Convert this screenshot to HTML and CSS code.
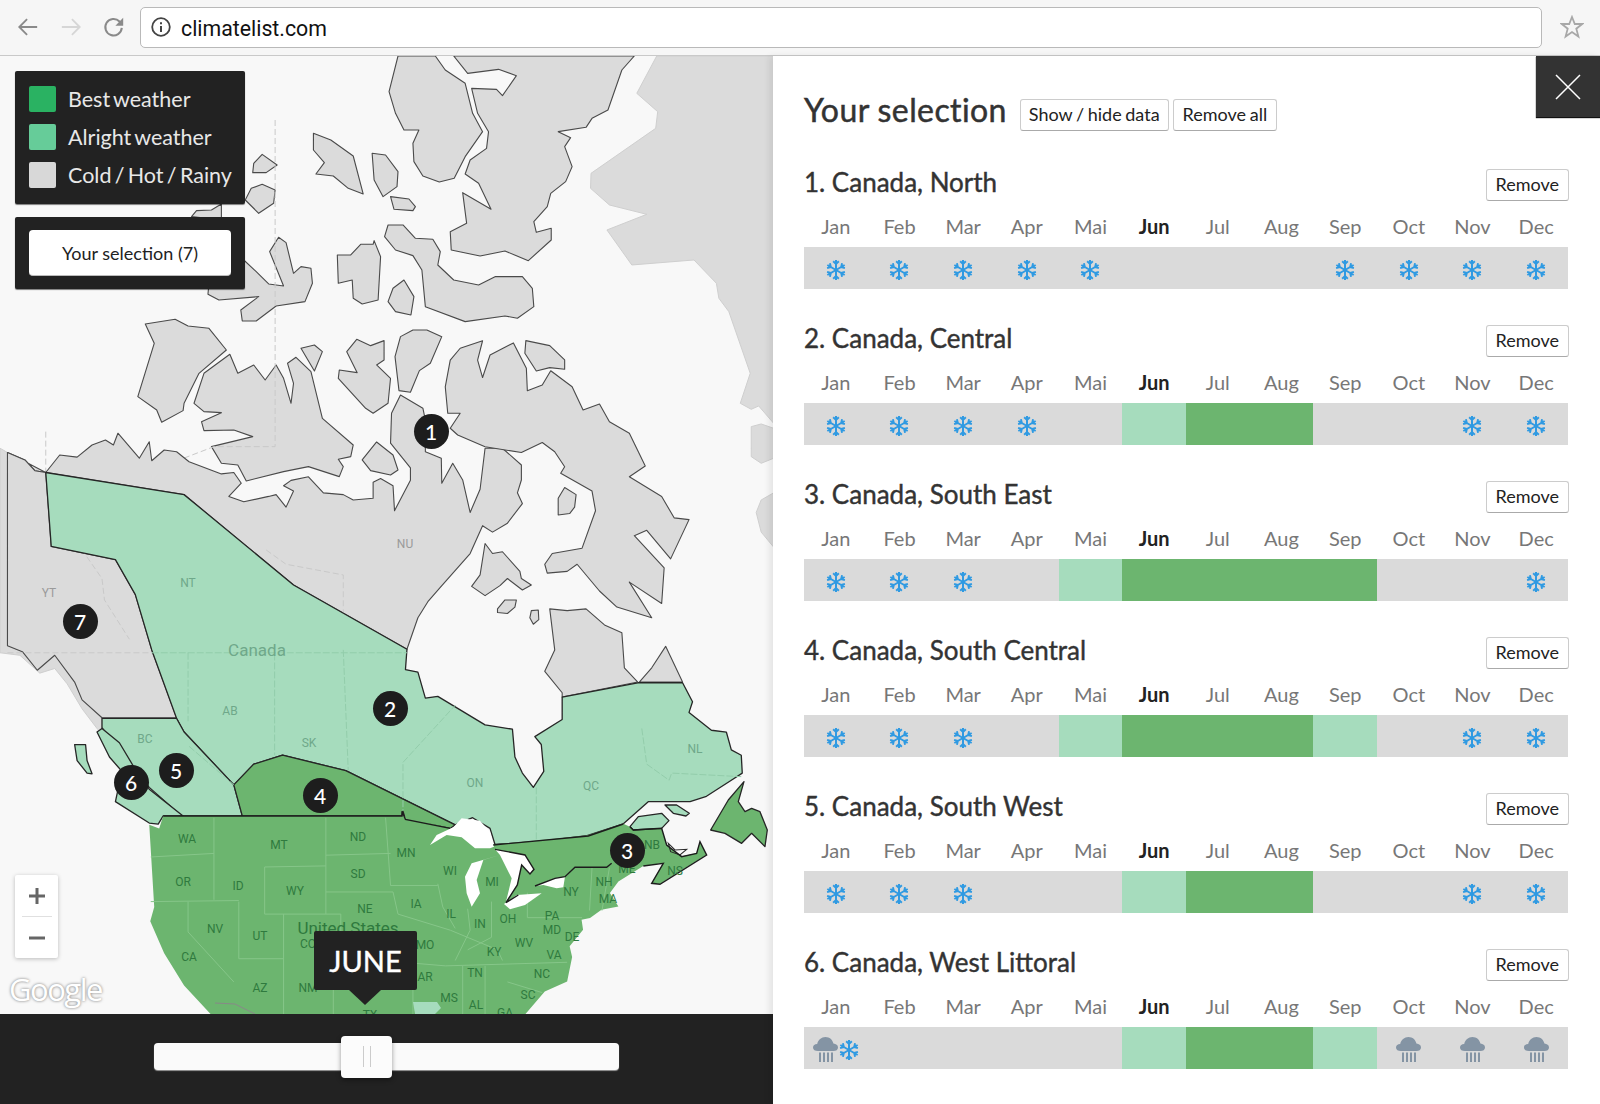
FILE: index.html
```html
<!DOCTYPE html>
<html lang="en">
<head>
<meta charset="utf-8">
<title>climatelist.com</title>
<link rel="stylesheet" href="styles.css">
</head>
<body>
<svg class="defs" width="0" height="0" aria-hidden="true">
  <symbol id="snow" viewBox="-12 -12 24 24">
    <g id="arms" fill="none" stroke="#2f9ae2" stroke-width="2.400" stroke-linecap="butt">
      <g id="arm"><path d="M0 0V-12M-3.400-10.400 0-7.200 3.400-10.400"/></g>
      <use href="#arm" transform="rotate(60)"/>
      <use href="#arm" transform="rotate(120)"/>
      <use href="#arm" transform="rotate(180)"/>
      <use href="#arm" transform="rotate(240)"/>
      <use href="#arm" transform="rotate(300)"/>
    </g>
  </symbol>
  <symbol id="rain" viewBox="0 0 25 25">
    <path fill="#8494a4" d="M5 14C2 14 0 12.600 0 10.400C0 8.200 2 6.800 4.200 6.900C5 3 8.400 0 12.500 0C16.600 0 19.600 2.800 20.400 6.600C23 6.800 25 8.300 25 10.400C25 12.600 23 14 20.500 14Z"/>
    <path fill="#8494a4" d="M6 15.500H8V25H6ZM10 15.500H12V25H10ZM14 15.500H16V25H14ZM18 15.500H20V25H18Z"/>
  </symbol>
</svg>

<header class="toolbar">
  <svg class="nav-icon" viewBox="0 0 24 24"><path d="M22 12H3M11 3.500 2.500 12 11 20.500" fill="none" stroke="#8a8a8a" stroke-width="2"/></svg>
  <svg class="nav-icon" viewBox="0 0 24 24"><path d="M2 12H21M13 3.500 21.500 12 13 20.500" fill="none" stroke="#d6d6d6" stroke-width="2"/></svg>
  <svg class="nav-icon" viewBox="0 0 24 24"><path d="M20.500 13A9 9 0 1 1 18 6L20 8" fill="none" stroke="#8a8a8a" stroke-width="2.200"/><path d="M22 2V10.500H13.500Z" fill="#8a8a8a"/></svg>
  <div class="urlbar">
    <svg class="info" viewBox="0 0 20 20"><circle cx="10" cy="10" r="8.800" fill="none" stroke="#444" stroke-width="1.800"/><path d="M9 9H11V15H9ZM9 5.200H11V7.200H9Z" fill="#444"/></svg>
    <span class="url">climatelist.com</span>
  </div>
  <svg class="star" viewBox="0 0 24 24"><path d="M12 2 14.800 9H22.200L16.300 13.700 18.400 21.500 12 17 5.600 21.500 7.700 13.700 1.800 9H9.200Z" fill="none" stroke="#a8a8a8" stroke-width="1.800"/></svg>
</header>

<main class="app">
  <section class="map-col">
    <div class="map">
      <svg class="map-svg" viewBox="0 56 773 958" width="773" height="958">
        <g transform="translate(0,450) scale(.4975,.357)">
          <path class="far" d="M0 -5 15 7 15 548 45 565 75 617 110 575 150 650 165 700 205 750 205 795 195 780 165 725 135 655 110 612 80 625 40 575 0 568Z"/>
          <path class="far" d="M1555 120 1530 140 1520 175 1530 230 1555 272ZM1510 -5 1530 35 1555 20 1555 -5Z"/>
        </g>
        <g transform="translate(0,50) scale(.4975,.3333)">
          <path class="far" d="M1320 18 1280 130 1322 185 1318 235 1188 370 1187 415 1225 465 1300 493 1220 540 1270 645 1395 630 1440 700 1445 745 1465 785 1508 970 1488 1060 1510 1078 1525 1068 1555 1120V18Z"/>
          <path class="far" d="M1510 1130 1530 1122 1555 1135V1225L1530 1240 1510 1220Z"/>
          <path class="land" d="M800 18 782 125 795 190 812 240H842L830 280 832 335 850 378 883 396 913 385 935 320 970 245 950 190 935 100 895 60 875 18Z"/>
          <path class="land" d="M912 18 940 70 1002 58 1038 77 1010 137 998 118 948 115 960 190 982 245 978 295 945 330 935 372 962 400 987 478 930 428 938 520 905 545 907 600 965 618 1015 603 1062 632 1108 570V535L1078 547 1073 515 1100 470 1107 430 1137 395 1150 350 1135 290 1147 263 1122 245 1178 232 1190 205 1222 180 1250 60 1275 18Z"/>
          <path class="land" d="M630 250 665 270 710 318 730 432 700 415 670 378 635 372 652 338 630 300Z"/>
          <path class="land" d="M748 310 775 315 800 365 798 410 770 440 752 390Z"/>
          <path class="land" d="M785 440 822 447 835 470 830 482 792 478Z"/>
          <path class="land" d="M527 313 557 345 535 368H508L510 340Z"/>
          <path class="land" d="M527 403 553 420 550 460 520 490 493 450 505 415Z"/>
          <path class="land" d="M385 500 395 482 425 480 445 462V510Z"/>
          <path class="land" d="M780 525 810 525 835 565 870 568 885 605 880 645 912 690 962 705 995 680 1050 680 1070 715 1073 770 1040 805 1015 798 935 815 855 770 848 660 830 617 795 600 773 560Z"/>
          <path class="land" d="M678 615H705L725 583H750L752 572 765 620 760 750 728 762 710 745 708 690 680 700Z"/>
          <path class="land" d="M812 690 832 740 826 795 795 785 780 755 790 715Z"/>
          <path class="land" d="M418 733 420 700 490 630 515 665 540 702 570 708 542 605 560 562 575 578 590 670 605 650 625 655 628 700 613 755 555 768 515 813H487L484 780 520 740 440 750Z"/>
          <path class="land" d="M292 822 352 808 378 828 420 835 455 900 400 970 370 1060 368 1082 325 1117 315 1080 277 1040 310 880Z"/>
          <path class="land" d="M462 913 478 970 510 945 533 990 555 945 570 985 585 1060 590 1000 578 940 595 922 625 965 648 1105 710 1185 705 1220 680 1228 690 1250 682 1280 620 1250 570 1265 495 1293 478 1245 445 1240 425 1190 508 1160 470 1140 410 1142 405 1115 445 1088 410 1085 390 1060 410 970Z"/>
          <path class="land" d="M605 895 632 885 648 905 632 963Z"/>
          <path class="land" d="M717 868 745 887 772 872V930L757 945 785 985 780 1060 750 1090 735 1075 680 985 682 960 718 968 697 905Z"/>
          <path class="land" d="M830 840H858L888 860 865 940 843 962 825 1027 802 1022 794 920 805 860Z"/>
          <path class="land" d="M1057 872 1105 887 1135 930V958L1105 953 1078 963 1055 910Z"/>
          <path class="land" d="M728 1230 757 1176 790 1215 800 1260 785 1275 745 1262Z"/>
          <path class="dash" d="M553 210V1190H430L360 1230V1340M92 1145V1265"/>
        </g>
        <g transform="translate(0,450) scale(.4975,.357)">
          <path class="land" d="M15 7 50 28 70 58 92 63 120 14 155 20 185 -14 212 -28 228 -14 237 -47 280 23 300 -23 305 30 330 0 355 5 380 33 445 67 470 63 485 93 460 130 490 145 540 130 555 125 575 160 590 115 570 100 585 85 620 75 650 120 690 125 710 140 750 135V90L765 80 790 100 793 170 825 85V50L785 -19 787 -103 805 -154 850 -117 855 -84V5L887 23 888 93 910 37 930 84 945 175 965 110 975 -5H1010L1048 42V84L1040 120 1050 150 1020 205 990 230 970 212 945 290 885 385 860 425 840 470 818 558 590 378 370 125 92 63Z"/>
          <path class="land" d="M1127 65 1190 115 1197 170 1170 275 1110 290 1095 320 1100 345 1140 340 1160 320 1205 395 1240 440 1310 470 1265 370 1330 430 1335 330 1275 240 1300 225 1348 305 1385 195 1355 190 1330 130 1265 75 1297 45 1265 -47 1225 -79 1205 -129 1172 -112 1150 -177 1107 -222 1090 -182 1060 -166 1058 -229 1032 -300 985 -266 970 -203 960 -252 970 -306 925 -285 905 -252 895 -177 900 -103H925L905 -61 920 -42 975 -9 1048 7 1090 -21 1115 5 1135 47Z"/>
          <path class="land" d="M1135 105 1158 125 1155 160 1145 178 1122 182V135Z"/>
          <path class="land" d="M975 262 990 290 1010 285 1045 340 1048 360 1068 378 1050 392 1020 360 1005 380 975 408 948 382 965 350Z"/>
          <path class="land" d="M1015 420H1038L1035 440 1020 458 1000 455V445Z"/>
          <path class="land" d="M1068 450 1082 448 1083 475 1072 488 1065 470Z"/>
          <path class="land" d="M1105 445 1140 450 1178 445 1215 490 1250 512 1255 610 1282 650 1130 692V680L1095 620 1115 560Z"/>
          <path class="land" d="M1338 550 1372 650H1285L1310 610Z"/>
          <path class="land" d="M15 7V548L45 565 75 617 110 575 150 650 165 700 205 750H355L305 560 272 405 232 307 103 270 92 63 70 58 50 28Z"/>
          <path class="dash" d="M535 280 575 320 690 350V560M15 568H305M140 185 150 250 205 360 210 420 260 530"/>

          <path class="light" d="M92 63 370 125 590 378 818 558 815 615 840 622 855 695 880 690 975 770 1030 782 1035 860 1050 905 1072 945 1093 900 1088 825 1075 803 1130 755V692L1282 652H1372L1392 705 1385 735 1430 785 1460 790 1470 840 1490 855 1492 905 1470 925 1420 970 1387 985H1303L1253 1047 1180 1080 1095 1095 995 1105 985 1060 950 1030 915 1050 695 898 568 855 510 880 470 938 370 790 355 752 305 560 272 405 232 307 103 270Z"/>
          <path class="light" d="M205 752H355L370 790 470 938 487 1025H365L300 945 250 860 205 778Z"/>
          <path class="light" d="M195 790 205 780 240 820 270 890 300 950 368 1025H328L318 1048 300 1045 232 985 245 900 220 860Z"/>
          <path class="light" d="M150 825H172L175 870 185 907 175 905 155 870Z"/>
          <path class="dark" d="M470 938 510 880 568 855 695 898 915 1050 905 1060 815 1035 810 1012 808 1025H487Z"/>
          <path class="dash-light" d="M305 568H818M378 568V760M552 570V855M690 560 700 898M810 880V1010M810 875 915 715M1078 945V1095M1290 780 1300 880 1345 925 1350 905 1490 915M380 830 470 938"/>

          <path class="us" d="M328 1025H810L905 1060 995 1105 1180 1080 1253 1047 1266 1055 1273 1064 1330 1059 1340 1106 1370 1139 1400 1129 1407 1097 1420 1134 1326 1216 1310 1213 1333 1157 1293 1165 1243 1209 1226 1241 1243 1279 1209 1288 1186 1311 1169 1316 1172 1344 1145 1390 1150 1420 1140 1489 1095 1517 1050 1590H430L370 1500 330 1410 302 1320 310 1280 300 1050 320 1060Z"/>
          <path class="states" d="M303 1140 430 1130M430 1030V1260M303 1265 480 1262M378 1265V1350L470 1490M480 1265V1425M480 1425H570M570 1300V1590M532 1168V1300H685M532 1168 655 1165M655 1030V1300M655 1135 785 1130M655 1238 790 1238M775 1030 785 1220H880M685 1300V1420L895 1445M790 1238 800 1300 905 1345M880 1215 890 1280 915 1340M940 1285 945 1345 915 1430M988 1265 988 1365 940 1400M1060 1240V1310H1170M905 1345 1000 1400 1010 1430M895 1445 1140 1435M930 1445V1590M975 1445V1590M1020 1490 1090 1520M830 1445V1590M670 1425V1590M1190 1170 1185 1290M1225 1170 1210 1290"/>
          <path class="border" d="M328 1025H808V1012L815 1035 905 1060"/>
        </g>
        <g transform="translate(430,750) scale(.3333)">
          <path class="dark" d="M942 95 895 150 842 240 885 250 935 280 965 250 1005 290 1012 240 990 185 965 175 945 185 925 155Z"/>
          <path class="light" d="M600 230 625 200 695 190 717 212 695 235 610 240Z"/>
          <path class="light" d="M705 165H740L778 190 768 198 730 190Z"/>
          <path class="outline" d="M715 280 735 300 770 298 750 315 722 305Z"/>
          <path class="lake" d="M0 285 20 255 70 232 95 205 150 212 180 245 192 290 180 295 135 295 95 262 50 255Z"/>
          <path class="lake" d="M105 380 125 340 210 315 160 330 140 390 150 430 125 470 110 430Z"/>
          <path class="lake" d="M195 298 285 315 312 358 300 372 275 345 262 405 228 455 245 385 210 315Z"/>
          <path class="lake" d="M222 462 260 435 335 430 285 465 240 478Z"/>
          <path class="lake" d="M315 408 375 385 405 380 400 412 380 415 340 405Z"/>
          <path class="border" d="M190 285 475 258 580 222M195 298 285 315 312 358 300 372 275 345 262 405 228 458 265 435M315 408 375 385 405 380 435 352H530L545 340M640 348 700 340 665 400 690 403 830 315 810 275 800 310 755 320 710 285 695 235 610 240 600 230"/>
        </g>
        <path class="tx-patch" d="M413 1002H437L441 1008 435 1014H415Z"/>
        <path class="mx" d="M215 1003 235 1004 255 1014"/>
        <g class="lbl lbl-grey">
          <text x="405" y="548">NU</text><text x="49" y="597">YT</text>
        </g>
        <g class="lbl lbl-light">
          <text x="188" y="587">NT</text><text x="230" y="715">AB</text><text x="309" y="747">SK</text><text x="145" y="743">BC</text><text x="475" y="787">ON</text><text x="591" y="790">QC</text><text x="695" y="753">NL</text>
          <text class="big" x="257" y="656">Canada</text>
        </g>
        <g class="lbl lbl-dark">
          <text x="187" y="843">WA</text><text x="279" y="849">MT</text><text x="358" y="841">ND</text><text x="406" y="857">MN</text><text x="450" y="875">WI</text><text x="492" y="886">MI</text><text x="183" y="886">OR</text><text x="238" y="890">ID</text><text x="295" y="895">WY</text><text x="358" y="878">SD</text><text x="365" y="913">NE</text><text x="416" y="908">IA</text><text x="451" y="918">IL</text><text x="480" y="928">IN</text><text x="508" y="923">OH</text><text x="552" y="920">PA</text><text x="552" y="934">MD</text><text x="572" y="941">DE</text><text x="571" y="896">NY</text><text x="604" y="886">NH</text><text x="608" y="903">MA</text><text x="627" y="873">ME</text><text x="652" y="849">NB</text><text x="675" y="875">NS</text><text x="215" y="933">NV</text><text x="260" y="940">UT</text><text x="189" y="961">CA</text><text x="260" y="992">AZ</text><text x="308" y="992">NM</text><text x="308" y="948">CO</text><text x="425" y="949">MO</text><text x="425" y="981">AR</text><text x="494" y="956">KY</text><text x="524" y="947">WV</text><text x="554" y="959">VA</text><text x="475" y="977">TN</text><text x="542" y="978">NC</text><text x="528" y="999">SC</text><text x="449" y="1002">MS</text><text x="476" y="1009">AL</text><text x="505" y="1017">GA</text><text x="370" y="1019">TX</text>
          <text class="big" x="348" y="934">United States</text>
        </g>
      </svg>

      <div class="legend-stack">
        <div class="legend">
          <div class="legend-row"><span class="swatch swatch-best"></span>Best weather</div>
          <div class="legend-row"><span class="swatch swatch-ok"></span>Alright weather</div>
          <div class="legend-row"><span class="swatch swatch-bad"></span>Cold / Hot / Rainy</div>
        </div>
        <div class="legend legend-btn"><button class="selection-btn">Your selection (7)</button></div>
      </div>

      <span class="pin pin-1">1</span><span class="pin pin-2">2</span><span class="pin pin-3">3</span><span class="pin pin-4">4</span><span class="pin pin-5">5</span><span class="pin pin-6">6</span><span class="pin pin-7">7</span>

      <div class="zoom">
        <span class="zoom-btn">
          <svg width="16" height="16" viewBox="0 0 16 16"><path d="M6.500 0H9.500V6.500H16V9.500H9.500V16H6.500V9.500H0V6.500H6.500Z" fill="#666"/></svg>
        </span>
        <span class="zoom-sep"></span>
        <span class="zoom-btn">
          <svg width="16" height="16" viewBox="0 0 16 16"><path d="M0 6.500H16V9.500H0Z" fill="#666"/></svg>
        </span>
      </div>
      <span class="google">Google</span>
      <div class="month-tip">JUNE</div>
    </div>
    <div class="slider-bar">
      <div class="track"><span class="thumb"></span></div>
    </div>
  </section>

  <aside class="panel">
    <button class="close" aria-label="Close">
      <svg width="26" height="26" viewBox="0 0 26 26"><path d="M1 1 25 25M25 1 1 25" stroke="#fff" stroke-width="1.500"/></svg>
    </button>
    <div class="panel-head">
      <h1>Your selection</h1>
      <button class="btn btn-data">Show / hide data</button>
      <button class="btn">Remove all</button>
    </div>

    <section class="region">
      <div class="region-head"><h2>1. Canada, North</h2><button class="btn">Remove</button></div>
      <div class="months"><span>Jan</span><span>Feb</span><span>Mar</span><span>Apr</span><span>Mai</span><span class="now">Jun</span><span>Jul</span><span>Aug</span><span>Sep</span><span>Oct</span><span>Nov</span><span>Dec</span></div>
      <div class="bar">
        <span><svg class="sn"><use href="#snow"/></svg></span><span><svg class="sn"><use href="#snow"/></svg></span><span><svg class="sn"><use href="#snow"/></svg></span><span><svg class="sn"><use href="#snow"/></svg></span><span><svg class="sn"><use href="#snow"/></svg></span><span></span><span></span><span></span><span><svg class="sn"><use href="#snow"/></svg></span><span><svg class="sn"><use href="#snow"/></svg></span><span><svg class="sn"><use href="#snow"/></svg></span><span><svg class="sn"><use href="#snow"/></svg></span>
      </div>
    </section>

    <section class="region">
      <div class="region-head"><h2>2. Canada, Central</h2><button class="btn">Remove</button></div>
      <div class="months"><span>Jan</span><span>Feb</span><span>Mar</span><span>Apr</span><span>Mai</span><span class="now">Jun</span><span>Jul</span><span>Aug</span><span>Sep</span><span>Oct</span><span>Nov</span><span>Dec</span></div>
      <div class="bar">
        <span><svg class="sn"><use href="#snow"/></svg></span><span><svg class="sn"><use href="#snow"/></svg></span><span><svg class="sn"><use href="#snow"/></svg></span><span><svg class="sn"><use href="#snow"/></svg></span><span></span><span class="ok"></span><span class="best"></span><span class="best"></span><span></span><span></span><span><svg class="sn"><use href="#snow"/></svg></span><span><svg class="sn"><use href="#snow"/></svg></span>
      </div>
    </section>

    <section class="region">
      <div class="region-head"><h2>3. Canada, South East</h2><button class="btn">Remove</button></div>
      <div class="months"><span>Jan</span><span>Feb</span><span>Mar</span><span>Apr</span><span>Mai</span><span class="now">Jun</span><span>Jul</span><span>Aug</span><span>Sep</span><span>Oct</span><span>Nov</span><span>Dec</span></div>
      <div class="bar">
        <span><svg class="sn"><use href="#snow"/></svg></span><span><svg class="sn"><use href="#snow"/></svg></span><span><svg class="sn"><use href="#snow"/></svg></span><span></span><span class="ok"></span><span class="best"></span><span class="best"></span><span class="best"></span><span class="best"></span><span></span><span></span><span><svg class="sn"><use href="#snow"/></svg></span>
      </div>
    </section>

    <section class="region">
      <div class="region-head"><h2>4. Canada, South Central</h2><button class="btn">Remove</button></div>
      <div class="months"><span>Jan</span><span>Feb</span><span>Mar</span><span>Apr</span><span>Mai</span><span class="now">Jun</span><span>Jul</span><span>Aug</span><span>Sep</span><span>Oct</span><span>Nov</span><span>Dec</span></div>
      <div class="bar">
        <span><svg class="sn"><use href="#snow"/></svg></span><span><svg class="sn"><use href="#snow"/></svg></span><span><svg class="sn"><use href="#snow"/></svg></span><span></span><span class="ok"></span><span class="best"></span><span class="best"></span><span class="best"></span><span class="ok"></span><span></span><span><svg class="sn"><use href="#snow"/></svg></span><span><svg class="sn"><use href="#snow"/></svg></span>
      </div>
    </section>

    <section class="region">
      <div class="region-head"><h2>5. Canada, South West</h2><button class="btn">Remove</button></div>
      <div class="months"><span>Jan</span><span>Feb</span><span>Mar</span><span>Apr</span><span>Mai</span><span class="now">Jun</span><span>Jul</span><span>Aug</span><span>Sep</span><span>Oct</span><span>Nov</span><span>Dec</span></div>
      <div class="bar">
        <span><svg class="sn"><use href="#snow"/></svg></span><span><svg class="sn"><use href="#snow"/></svg></span><span><svg class="sn"><use href="#snow"/></svg></span><span></span><span></span><span class="ok"></span><span class="best"></span><span class="best"></span><span></span><span></span><span><svg class="sn"><use href="#snow"/></svg></span><span><svg class="sn"><use href="#snow"/></svg></span>
      </div>
    </section>

    <section class="region">
      <div class="region-head"><h2>6. Canada, West Littoral</h2><button class="btn">Remove</button></div>
      <div class="months"><span>Jan</span><span>Feb</span><span>Mar</span><span>Apr</span><span>Mai</span><span class="now">Jun</span><span>Jul</span><span>Aug</span><span>Sep</span><span>Oct</span><span>Nov</span><span>Dec</span></div>
      <div class="bar">
        <span><svg class="ra"><use href="#rain"/></svg><svg class="sn"><use href="#snow"/></svg></span><span></span><span></span><span></span><span></span><span class="ok"></span><span class="best"></span><span class="best"></span><span class="ok"></span><span><svg class="ra"><use href="#rain"/></svg></span><span><svg class="ra"><use href="#rain"/></svg></span><span><svg class="ra"><use href="#rain"/></svg></span>
      </div>
    </section>
  </aside>
</main>
</body>
</html>
```

FILE: styles.css
```css
* { box-sizing: border-box; }
html, body { margin: 0; height: 100%; }
body {
  width: 1600px;
  height: 1104px;
  overflow: hidden;
  display: flex;
  flex-direction: column;
  font-family: "Lato", "Liberation Sans", sans-serif;
  color: #333;
  background: #fff;
}
.defs { position: absolute; }

/* browser chrome */
.toolbar {
  flex: 0 0 56px;
  display: flex;
  align-items: center;
  gap: 21px;
  padding: 0 12px 1px 17px;
  background: #f6f6f6;
  border-bottom: 1px solid #c9c9c9;
}
.nav-icon { width: 22px; height: 22px; flex: none; }
.urlbar {
  flex: 1;
  height: 41px;
  margin-left: -6px;
  margin-right: -3px;
  display: flex;
  align-items: center;
  gap: 10px;
  padding-left: 10px;
  background: #fff;
  border: 1px solid #b9b9b9;
  border-radius: 5px;
}
.info { width: 20px; height: 20px; flex: none; }
.url { font-family: "Roboto", sans-serif; font-size: 21.300px; color: #111; padding-top: 2px; }
.star { width: 24px; height: 24px; flex: none; margin-right: 4px; }

.app { flex: 1; display: flex; min-height: 0; }

/* map column */
.map-col { flex: 0 0 773px; display: flex; flex-direction: column; }
.map { position: relative; flex: 1; background: #f8f8f8; overflow: hidden; }
.map-svg { display: block; }
.map-svg path { vector-effect: non-scaling-stroke; }
.far { fill: #dbdbdb; stroke: #cfcfcf; stroke-width: 1; }
.land { fill: #dbdbdb; stroke: #4a4a4a; stroke-width: 1.100; stroke-linejoin: round; }
.outline { fill: none; stroke: #2a2a2a; stroke-width: 1.100; }
.light { fill: #a6dcbd; stroke: #262626; stroke-width: 1.300; stroke-linejoin: round; }
.dark { fill: #6cb56f; stroke: #262626; stroke-width: 1.300; stroke-linejoin: round; }
.us { fill: #6cb56f; stroke: none; }
.lake { fill: #fff; stroke: none; }
.border { fill: none; stroke: #1c1c1c; stroke-width: 1.400; }
.dash { fill: none; stroke: #c9c9c9; stroke-width: 1; stroke-dasharray: 6 3; }
.dash-light { fill: none; stroke: #93cdab; stroke-width: 1; stroke-dasharray: 7 2; }
.states { fill: none; stroke: #86c689; stroke-width: 1; }
.tx-patch { fill: #a6dcbd; }
.mx { fill: none; stroke: #888; stroke-width: 1; }

.lbl text { font-family: "Roboto", sans-serif; font-size: 12px; text-anchor: middle; }
.lbl text.big { font-size: 17px; }
.lbl-grey { fill: #9a9a9a; }
.lbl-light { fill: #6fa88a; }
.lbl-dark { fill: #2f7a3e; }

/* legend */
.legend-stack {
  position: absolute;
  left: 15px;
  top: 15px;
  width: 230px;
  display: flex;
  flex-direction: column;
  gap: 13px;
}
.legend {
  background: #222;
  border-radius: 2px;
  box-shadow: 0 1px 1px rgba(0, 0, 0, .5);
  padding: 15px 14px 16px;
  display: flex;
  flex-direction: column;
  gap: 12px;
}
.legend-row {
  display: flex;
  align-items: center;
  gap: 12px;
  height: 26px;
  font-size: 21.500px;
  word-spacing: -2.200px;
  color: #e8e8e8;
  white-space: nowrap;
}
.swatch { flex: 0 0 27px; height: 26px; border-radius: 2px; }
.swatch-best { background: #2ab262; }
.swatch-ok { background: #66cc99; }
.swatch-bad { background: #d8d8d8; }
.legend-btn { padding: 13px 14px; }
.selection-btn {
  height: 46px;
  border: 0;
  border-bottom: 1px solid #bbb;
  border-radius: 4px;
  background: #fff;
  font: 18px "Lato", sans-serif;
  color: #222;
}

/* pins */
.pin {
  position: absolute;
  width: 35px;
  height: 35px;
  margin: -17.500px 0 0 -17.500px;
  border-radius: 50%;
  background: #1d1d1d;
  color: #fff;
  font-size: 21px;
  font-weight: 500;
  display: flex;
  align-items: center;
  justify-content: center;
}
.pin-1 { left: 431px; top: 375px; }
.pin-2 { left: 390px; top: 652px; }
.pin-3 { left: 627px; top: 794px; }
.pin-4 { left: 320px; top: 739px; }
.pin-5 { left: 176px; top: 714px; }
.pin-6 { left: 131px; top: 726px; }
.pin-7 { left: 80px; top: 565px; }

/* map controls */
.zoom {
  position: absolute;
  left: 15px;
  top: 819px;
  width: 43px;
  height: 83px;
  background: #fff;
  border-radius: 2px;
  box-shadow: 0 1px 4px rgba(0, 0, 0, .25);
  display: flex;
  flex-direction: column;
  align-items: center;
}
.zoom-btn { flex: 1; display: flex; align-items: center; justify-content: center; }
.zoom-sep { width: 30px; height: 1px; background: #e0e0e0; }
.google {
  position: absolute;
  left: 9px;
  top: 912px;
  font-family: "Open Sans", sans-serif;
  font-size: 31px;
  letter-spacing: -1.500px;
  color: #fff;
  text-shadow: 0 0 3px rgba(0, 0, 0, .55);
}
.month-tip {
  position: absolute;
  left: 314px;
  top: 875px;
  width: 103px;
  height: 59px;
  background: #222;
  border-radius: 2px;
  color: #fff;
  font-size: 29px;
  -webkit-text-stroke: .4px #fff;
  display: flex;
  align-items: center;
  justify-content: center;
}
.month-tip::after {
  content: "";
  position: absolute;
  left: 35px;
  top: 59px;
  border-left: 16px solid transparent;
  border-right: 16px solid transparent;
  border-top: 15px solid #222;
}

/* slider */
.slider-bar {
  flex: 0 0 90px;
  background: #222;
  padding-left: 154px;
  padding-top: 29px;
}
.track {
  position: relative;
  width: 465px;
  height: 27px;
  background: #fafafa;
  border-radius: 4px;
  box-shadow: 0 1px 1px #999;
}
.thumb {
  position: absolute;
  left: 187px;
  top: -7px;
  width: 51px;
  height: 42px;
  background: #fcfcfc;
  border-radius: 4px;
  box-shadow: 0 2px 5px rgba(0, 0, 0, .4);
}
.thumb::before {
  content: "";
  position: absolute;
  left: 22px;
  top: 10px;
  width: 6px;
  height: 21px;
  border-left: 1px solid #ccc;
  border-right: 1px solid #ccc;
}

/* panel */
.panel {
  position: relative;
  flex: 1;
  padding: 43px 32px 0 31px;
  background: #fff;
  box-shadow: -4px 0 6px rgba(0, 0, 0, .08);
  overflow: hidden;
}
.close {
  position: absolute;
  right: 0;
  top: 0;
  width: 64px;
  height: 61px;
  border: 0;
  padding: 0;
  background: #333;
  box-shadow: 0 1px 1px #111;
  display: flex;
  align-items: center;
  justify-content: center;
}
.panel-head {
  display: flex;
  align-items: flex-start;
  height: 32px;
  gap: 4px;
  margin-bottom: 38px;
}
h1 {
  margin: 0 9px 0 0;
  font-size: 32px;
  line-height: 22px;
  font-weight: 400;
  letter-spacing: .4px;
  -webkit-text-stroke: .5px #333;
  color: #333;
  white-space: nowrap;
}
.btn {
  height: 32px;
  padding: 0 9px 2px;
  background: #fff;
  border: 1px solid #ccc;
  border-bottom-color: #aaa;
  border-radius: 3px;
  font: 18px "Lato", sans-serif;
  word-spacing: -1px;
  color: #222;
  white-space: nowrap;
}
.btn-data { padding: 0 8px 2px; }
.region { margin-bottom: 36px; }
.region-head {
  display: flex;
  align-items: flex-start;
  justify-content: space-between;
  height: 32px;
}
.region-head .btn { margin-right: -1px; }
h2 {
  margin: 0;
  font-size: 26px;
  line-height: 26px;
  font-weight: 400;
  -webkit-text-stroke: .4px #333;
  color: #333;
}
.months {
  display: grid;
  grid-template-columns: repeat(12, 1fr);
  height: 46px;
  padding-top: 3px;
  align-items: center;
  text-align: center;
  font-size: 20px;
  color: #777;
}
.months .now { font-weight: 700; color: #222; }
.bar {
  display: grid;
  grid-template-columns: repeat(12, 1fr);
  height: 42px;
  background: #dadada;
}
.bar span { display: flex; align-items: center; justify-content: center; gap: 1px; padding-top: 3px; }
.bar .ok { background: #a6dcbd; }
.bar .best { background: #6cb56f; }
.sn { width: 20px; height: 20px; }
.ra { width: 25px; height: 25px; }
```
